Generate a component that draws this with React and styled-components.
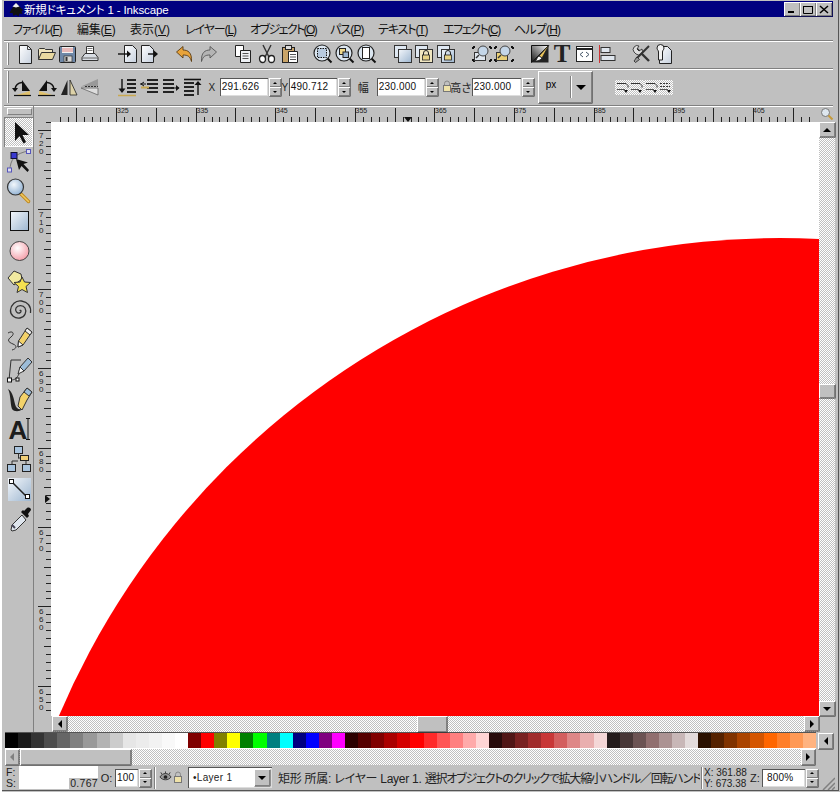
import React from 'react';
import styled, { createGlobalStyle, css } from 'styled-components';

const GlobalStyle = createGlobalStyle`
  html, body { margin: 0; padding: 0; background: #c0c0c0; }
  body { font-family: "Liberation Sans", "Noto Sans CJK JP", sans-serif; font-feature-settings: "palt"; }
`;

const raised = css`
  background-color: #c0c0c0;
  box-shadow: inset 1px 1px 0 #fff, inset -1px -1px 0 #808080, 0.5px 0.5px 0 #222;
`;
const sunken = css`
  background-color: #fff;
  box-shadow: inset 1px 1px 0 #555, inset -1px -1px 0 #ddd;
`;
const dither = css`
  background-image: conic-gradient(#fff 25%, #c0c0c0 0 50%, #fff 0 75%, #c0c0c0 0);
  background-size: 2px 2px;
`;

const Window = styled.div`
  width: 840px;
  height: 792px;
  box-sizing: border-box;
  padding: 1px 7px 2px 4px;
  display: flex;
  flex-direction: column;
  overflow: hidden;
  background: #c0c0c0;
  box-shadow: inset 2px 0 0 #fff, inset 1px 0 0 #c0c0c0, inset -1px -1px 0 #c0c0c0, inset -2px -2px 0 #555;
`;

const TitleBar = styled.div`
  height: 16px;
  flex: none;
  background: #000080;
  display: flex;
  align-items: center;
  padding: 0 1px 0 3px;
  color: #fff;
  font-size: 11.5px;
  letter-spacing: -0.15px;
`;
const TitleText = styled.span`
  margin-left: -1px;
  flex: 1;
  white-space: nowrap;
`;
const WinButton = styled.div`
  ${raised}
  width: 16px;
  height: 14px;
  display: flex;
  align-items: center;
  justify-content: center;
`;

const MenuBar = styled.div`
  height: 24px;
  flex: none;
  box-sizing: border-box;
  display: flex;
  align-items: center;
  padding: 0 0 1px 9px;
  border-bottom: 1px solid #808080;
  box-shadow: 0 1px 0 #fff;
  font-size: 12px;
  color: #111;
`;
const MenuItem = styled.div`
  width: ${p => p.$w}px;
  flex: none;
  white-space: nowrap;
  letter-spacing: ${p => p.$ls}px;
  u { text-underline-offset: 1px; }
`;

const Toolbar = styled.div`
  height: ${p => p.$h}px;
  flex: none;
  display: flex;
  align-items: center;
  padding: 0 0 ${p => p.$pb || 0}px 3px;
  box-sizing: border-box;
  border-bottom: 1px solid #808080;
  box-shadow: 0 1px 0 #fff;
`;
const Handle = styled.div`
  width: 2px;
  height: ${p => p.$h}px;
  flex: none;
  box-sizing: border-box;
  margin-right: 1px;
  border-left: 1px solid #fff;
  border-right: 1px solid #808080;
`;
const Group = styled.div`
  display: flex;
  flex: none;
  margin-left: ${p => p.$ml}px;
  > * { width: ${p => p.$step}px; }
`;
const IconCell = styled.div`
  height: 22px;
  display: flex;
  align-items: center;
  justify-content: center;
  flex: none;
`;

const FieldLabel = styled.span`
  flex: none;
  width: ${p => p.$w}px;
  margin-left: ${p => p.$ml || 0}px;
  font-size: ${p => p.$size || 10}px;
  text-align: center;
  white-space: nowrap;
  color: #222;
`;
const Field = styled.div`
  ${sunken}
  flex: none;
  box-sizing: border-box;
  width: ${p => p.$w}px;
  height: 18px;
  line-height: 18px;
  padding-left: ${p => p.$pad || 2}px;
  font-size: 10px;
  letter-spacing: 0.2px;
  color: #111;
  white-space: nowrap;
  overflow: hidden;
`;
const Spinner = styled.div`
  flex: none;
  width: 12px;
  height: 18px;
  margin-left: 1px;
  display: flex;
  flex-direction: column;
`;
const SpinPart = styled.div`
  ${raised}
  flex: 1;
  display: flex;
  align-items: center;
  justify-content: center;
`;
const Tri = styled.i`
  display: block;
  width: 0;
  height: 0;
  ${p => p.$dir === 'up' && css`border-left: ${p.$s}px solid transparent; border-right: ${p.$s}px solid transparent; border-bottom: ${p.$s}px solid ${p.$c || '#000'};`}
  ${p => p.$dir === 'down' && css`border-left: ${p.$s}px solid transparent; border-right: ${p.$s}px solid transparent; border-top: ${p.$s}px solid ${p.$c || '#000'};`}
  ${p => p.$dir === 'left' && css`border-top: ${p.$s}px solid transparent; border-bottom: ${p.$s}px solid transparent; border-right: ${p.$s}px solid ${p.$c || '#000'};`}
  ${p => p.$dir === 'right' && css`border-top: ${p.$s}px solid transparent; border-bottom: ${p.$s}px solid transparent; border-left: ${p.$s}px solid ${p.$c || '#000'};`}
`;
const UnitCombo = styled.div`
  ${raised}
  flex: none;
  width: 54px;
  height: 32px;
  margin-left: 4px;
  display: flex;
  align-items: center;
  font-size: 10px;
  box-sizing: border-box;
  padding-left: 8px;
`;
const UnitText = styled.span`
  width: 24px;
  margin-top: -6px;
`;
const UnitArrow = styled.div`
  flex: 1;
  height: 22px;
  border-left: 1px solid #808080;
  box-shadow: inset 1px 0 0 #fff;
  display: flex;
  align-items: center;
  justify-content: center;
`;
const SnapCell = styled.div`
  ${dither}
  width: 14.5px;
  height: 15px;
  flex: none;
  display: flex;
  align-items: center;
  justify-content: center;
`;
const SnapRow = styled.div`
  display: flex;
  margin-left: 23px;
`;

const Workspace = styled.div`
  height: 627px;
  flex: none;
  display: flex;
`;
const Toolbox = styled.div`
  width: 30px;
  flex: none;
  box-sizing: border-box;
  border-right: 1px solid #808080;
  display: flex;
  flex-direction: column;
`;
const ToolboxHandle = styled.div`
  height: 5px;
  margin: 2px 1px 2px 3px;
  border: 1px solid;
  border-color: #fff #808080 #808080 #fff;
  flex: none;
`;
const ToolButton = styled.div`
  height: 29.75px;
  flex: none;
  display: flex;
  align-items: center;
  justify-content: center;
  ${p => p.$active && css`${dither} box-shadow: inset 1px 1px 0 #808080, inset -1px -1px 0 #fff;`}
`;
const CanvasGrid = styled.div`
  flex: 1;
  display: grid;
  grid-template-columns: 17px 768px 16px;
  grid-template-rows: 16px 594px 16px;
`;
const TopRuler = styled.svg`
  grid-column: 1 / 3;
  display: block;
`;
const Corner = styled.div`
  display: flex;
  align-items: center;
  justify-content: center;
`;
const SideRuler = styled.svg`
  display: block;
`;
const Canvas = styled.div`
  background: #fff;
  overflow: hidden;
  svg { display: block; }
`;
const VScroll = styled.div`
  ${dither}
  display: flex;
  flex-direction: column;
  justify-content: space-between;
  position: relative;
`;
const VThumb = styled.div`
  ${raised}
  position: absolute;
  left: 0;
  right: 0;
  top: ${p => p.$top}px;
  height: 14px;
`;
const HScroll = styled.div`
  ${dither}
  height: 16px;
  display: flex;
  justify-content: space-between;
  position: relative;
  grid-column: ${p => p.$span || 'auto'};
  margin-left: ${p => p.$ml || 0}px;
  margin-right: ${p => p.$mr || 0}px;
`;
const HThumb = styled.div`
  ${raised}
  position: absolute;
  top: 0;
  bottom: 0;
  left: ${p => p.$left}px;
  width: ${p => p.$w}px;
`;
const ArrowBtn = styled.div`
  ${raised}
  width: ${p => p.$w || 15}px;
  height: ${p => p.$h || 15}px;
  flex: none;
  display: flex;
  align-items: center;
  justify-content: center;
`;

const PaletteRow = styled.div`
  height: 16px;
  flex: none;
  display: flex;
  padding-left: 1px;
`;
const Swatches = styled.div`
  width: 811px;
  height: 15px;
  flex: none;
  display: flex;
  box-shadow: 0 -1px 0 #555, 0 1px 0 #fff;
`;
const Swatch = styled.div`
  flex: 1;
  background: ${p => p.$c};
`;
const PaletteBtn = styled.div`
  ${raised}
  margin-left: 2px;
  width: 16px;
  height: 16px;
  display: flex;
  align-items: center;
  justify-content: center;
`;

const StatusBar = styled.div`
  flex: 1;
  display: flex;
  align-items: center;
  font-size: 11.5px;
  color: #222;
  min-height: 0;
`;
const FillLabels = styled.div`
  width: 13px;
  margin-left: 2px;
  flex: none;
  font-size: 10.5px;
  line-height: 11px;
`;
const FillBoxes = styled.div`
  width: 79px;
  height: 23px;
  flex: none;
  display: flex;
  flex-direction: column;
`;
const FillBox = styled.div`
  height: 12px;
  background: #fff;
`;
const StrokeRow = styled.div`
  display: flex;
  flex: 1;
  align-items: flex-end;
  justify-content: space-between;
  font-size: 10.5px;
  line-height: 11px;
  letter-spacing: 0.3px;
`;
const StrokeBox = styled.div`
  width: 50px;
  height: 11px;
  background: #fff;
`;
const Divider = styled.div`
  flex: none;
  width: 0;
  height: 22px;
  margin: 0 ${p => p.$m || 2}px;
  border-left: 1px solid #808080;
  border-right: 1px solid #fff;
`;
const LayerCombo = styled.div`
  ${sunken}
  flex: none;
  width: 84px;
  height: 21px;
  margin-left: 4px;
  box-sizing: border-box;
  padding: 2px;
  display: flex;
  align-items: center;
  justify-content: space-between;
  font-size: 10px;
  letter-spacing: 0.3px;
`;
const LayerName = styled.span`
  padding-left: 3px;
`;
const Message = styled.div`
  flex: none;
  width: 422px;
  margin-left: 6px;
  font-size: 12px;
  letter-spacing: -0.25px;
  white-space: nowrap;
  overflow: hidden;
`;
const MessageTail = styled.span`
  letter-spacing: -1.2px;
`;
const Coords = styled.div`
  flex: none;
  width: 44px;
  font-size: 10px;
  line-height: 11px;
  white-space: nowrap;
`;
const Grip = styled.svg`
  flex: none;
  margin-left: 2px;
  align-self: flex-end;
`;
const GradientDefs = styled.svg`
  position: absolute;
  width: 0;
  height: 0;
`;

const Ico = ({ s = 20, children }) => (
  <svg width={s} height={s} viewBox={`0 0 ${s} ${s}`}>{children}</svg>
);

const Defs = () => (
  <GradientDefs>
    <defs>
      <linearGradient id="pg" x1="0" y1="0" x2="1" y2="1"><stop offset="0" stopColor="#fff" /><stop offset="1" stopColor="#c6d0de" /></linearGradient>
      <linearGradient id="bl" x1="0" y1="0" x2="1" y2="1"><stop offset="0" stopColor="#f4f7fb" /><stop offset="1" stopColor="#9db6d0" /></linearGradient>
      <linearGradient id="gold" x1="0" y1="0" x2="1" y2="1"><stop offset="0" stopColor="#fff3b0" /><stop offset="1" stopColor="#d9a030" /></linearGradient>
      <linearGradient id="fillg" x1="0" y1="1" x2="1" y2="0"><stop offset="0" stopColor="#111" /><stop offset="1" stopColor="#fff" /></linearGradient>
      <radialGradient id="pink" cx="0.4" cy="0.35" r="0.7"><stop offset="0" stopColor="#fff" /><stop offset="1" stopColor="#f49ba6" /></radialGradient>
      <radialGradient id="lens" cx="0.4" cy="0.35" r="0.7"><stop offset="0" stopColor="#f2f7fc" /><stop offset="1" stopColor="#8fb0d2" /></radialGradient>
    </defs>
  </GradientDefs>
);

const Page = ({ x = 4, y = 1, w = 12, h = 18 }) => (
  <path d={`M${x + .5} ${y + .5}h${w - 4}l4 4v${h - 4}h-${w}z`} fill="url(#pg)" stroke="#222" />
);
const NewIcon = () => <Ico><Page /><path d="M12.5 1.5v4h4" fill="none" stroke="#444" /></Ico>;
const OpenIcon = () => <Ico><path d="M1.5 15.5v-10l1-1h5l1 1h7v3" fill="#efe4bd" stroke="#333" /><path d="M1.5 15.5l3-7h14l-3 7z" fill="#e9d9a0" stroke="#333" /></Ico>;
const SaveIcon = () => (
  <Ico>
    <rect x="1.5" y="2.5" width="16" height="16" rx="1" fill="#6f88a8" stroke="#222" />
    <rect x="4" y="3" width="11" height="6" fill="#f2f2f2" />
    <path d="M4 5h11M4 7h11" stroke="#c33" strokeWidth=".6" />
    <rect x="6" y="12" width="8" height="6" fill="#d8d8d8" stroke="#333" strokeWidth=".7" />
    <rect x="7.5" y="13" width="2" height="4" fill="#333" />
  </Ico>
);
const PrintIcon = () => (
  <Ico>
    <path d="M6.5 2.5h7v7h-7z" fill="#fff" stroke="#333" />
    <path d="M7.5 4.5h5M7.5 6.500h5" stroke="#777" />
    <path d="M5 9.500h10l3 4v3H2v-3z" fill="#d8dde4" stroke="#333" />
    <path d="M2 14h16" stroke="#666" />
  </Ico>
);
const ImportIcon = () => <Ico><Page x={6} y={1} w={12} h={17} /><path d="M0 10h11" stroke="#111" strokeWidth="1.4" /><path d="M9 6.500l4 3.500-4 3.500z" fill="#111" /></Ico>;
const ExportIcon = () => <Ico><Page x={2} y={1} w={12} h={17} /><path d="M9 10h8" stroke="#111" strokeWidth="1.4" /><path d="M15 6.500l4 3.500-4 3.500z" fill="#111" /></Ico>;
const UndoIcon = () => (
  <Ico>
    <path d="M1.500 8L8 2.500v3.500c5 0 9 2.500 8.500 11.500-1.500-5-3.500-6.500-8.500-6.500v3z" fill="#e8a33a" stroke="#5a3a10" strokeWidth=".9" />
  </Ico>
);
const RedoIcon = () => (
  <Ico>
    <path d="M18.500 8L12 2.500v3.500c-5 0-9 2.500-8.500 11.500 1.500-5 3.500-6.500 8.500-6.500v3z" fill="#b4b4b4" stroke="#555" strokeWidth=".9" />
  </Ico>
);
const DuplicateIcon = () => (
  <Ico>
    <path d="M2.500 1.500h8v11h-8z" fill="#fff" stroke="#222" />
    <path d="M7.500 6.500h10v12h-10z" fill="#eef1f5" stroke="#222" />
    <path d="M9.500 9.500h6M9.500 12h6M9.500 14.500h6" stroke="#555" />
  </Ico>
);
const CutIcon = () => (
  <Ico>
    <path d="M6 1l6 12M14 1L8 13" stroke="#333" strokeWidth="1.4" />
    <ellipse cx="5.500" cy="15" rx="3" ry="3.500" fill="#fff" stroke="#222" strokeWidth="1.300" />
    <ellipse cx="14.500" cy="15" rx="3" ry="3.500" fill="#fff" stroke="#222" strokeWidth="1.300" />
  </Ico>
);
const PasteIcon = () => (
  <Ico>
    <rect x="2.500" y="3.500" width="12" height="15" fill="#c9a468" stroke="#222" />
    <rect x="5.500" y="1.500" width="6" height="4" fill="#ddd" stroke="#222" />
    <path d="M8.500 7.500h9v11h-9z" fill="#fff" stroke="#222" />
    <path d="M10 10.500h6M10 13h6M10 15.500h6" stroke="#555" />
  </Ico>
);
const ZoomBase = ({ children }) => (
  <Ico>
    <path d="M13 13l5.500 5.500" stroke="#111" strokeWidth="2" />
    <circle cx="9" cy="9" r="8" fill="#dbe6f0" stroke="#222" strokeWidth="1.200" />
    {children}
  </Ico>
);
const ZoomSelIcon = () => <ZoomBase><rect x="4.500" y="4.500" width="9" height="9" fill="#b8cbe0" stroke="#111" strokeDasharray="1.500 1" /></ZoomBase>;
const ZoomDrawIcon = () => <ZoomBase><rect x="4.500" y="4.500" width="6" height="6" fill="#f0d98a" stroke="#222" /><rect x="8" y="8" width="5.500" height="5.500" fill="#9db6d0" stroke="#222" /></ZoomBase>;
const ZoomPageIcon = () => <ZoomBase><rect x="5.500" y="3.500" width="7" height="11" fill="#fff" stroke="#222" /></ZoomBase>;
const Stack = ({ lock, gold }) => (
  <Ico>
    <rect x="1.500" y="1.500" width="12" height="12" fill="#dfe8f2" stroke="#333" />
    <rect x="5.500" y="5.500" width="13" height="13" fill={gold ? '#f0e6c0' : 'url(#bl)'} stroke="#333" />
    {lock && <path d="M9.500 11v-2a2.500 2.500 0 0 1 5 0v2" fill="none" stroke="#222" />}
    {lock && <rect x="8.500" y="11" width="7" height="5" fill="#e8d488" stroke="#222" strokeWidth=".8" />}
  </Ico>
);
const SnapLens = ({ gold }) => (
  <Ico s={22}>
    <path d="M2 4h2M2 4v2M20 4h-2M20 4v2M2 18h2M2 18v-2M20 18h-2M20 18v-2" stroke="#111" strokeWidth="2" />
    <rect x="3.500" y="9.500" width="11" height="8" fill={gold ? '#e9cf76' : '#dfe6ee'} stroke="#333" />
    <circle cx="12" cy="8" r="5" fill="#c4d6e8" stroke="#444" />
    <path d="M8 12l-3 3" stroke="#333" strokeWidth="1.500" />
  </Ico>
);
const FillIcon = () => (
  <Ico s={22}>
    <path d="M2.500 2.500h17l-17 17z" fill="url(#fillg)" stroke="#111" />
    <path d="M2.500 19.500h17v-17z" fill="#222" />
    <path d="M20 2L10 13l3 2z" fill="#e9c35a" stroke="#222" strokeWidth=".8" />
    <path d="M10 13c-2 1-2 4-4 5 3 0 6-1 7-3z" fill="#fff" stroke="#222" strokeWidth=".8" />
  </Ico>
);
const BigT = styled.span`
  font-family: "Liberation Serif", serif;
  font-weight: bold;
  font-size: 25px;
  line-height: 22px;
  color: #222;
`;
const XmlIcon = () => (
  <Ico>
    <rect x="1.500" y="2.500" width="16" height="15" fill="#fff" stroke="#222" />
    <path d="M2 5h15" stroke="#222" strokeWidth="2" />
    <path d="M8 8l-3 2.500L8 13M11 8l3 2.500L11 13" fill="none" stroke="#456" />
  </Ico>
);
const AlignIcon = () => (
  <Ico>
    <path d="M2.500 1v18" stroke="#c33" strokeWidth="1" />
    <rect x="4" y="3.500" width="9" height="5" fill="#dfe6ee" stroke="#333" />
    <rect x="4" y="11.500" width="14" height="5" fill="#dfe6ee" stroke="#333" />
  </Ico>
);
const PrefsIcon = () => (
  <Ico>
    <path d="M4 4l13 13" stroke="#333" strokeWidth="2.400" />
    <path d="M2 8a4 4 0 0 1 5-6l-2 3 2 2 3-2a4 4 0 0 1-6 5z" fill="#ddd" stroke="#222" strokeWidth=".8" />
    <path d="M17 2L4 15" stroke="#333" strokeWidth="2" />
    <path d="M5 13l-3 4 1.500 1.500 4-3z" fill="#999" stroke="#222" strokeWidth=".8" />
  </Ico>
);
const DocIcon = () => (
  <Ico>
    <Page x={5} y={2} w={12} h={17} />
    <path d="M3 4a3.500 3.500 0 0 1 7 0c0 2-1.500 2-1.500 4v8h-4V8C4.500 6 3 6 3 4z" fill="#f2f2f2" stroke="#222" />
  </Ico>
);
const RotateIcon = ({ flip }) => (
  <Ico>
    <g transform={flip ? 'translate(20 0) scale(-1 1)' : undefined}>
      <path d="M10 3l8 11h-8z" fill="#111" />
      <path d="M3 18.500l15-4.500v4.500z" fill="#e2c36e" />
      <path d="M2 18.500h17" stroke="#111" strokeWidth="1.200" />
      <path d="M3 12a8 7.500 0 0 1 7-6.500" fill="none" stroke="#111" strokeWidth="1.500" />
      <path d="M0 11h6l-3 4z" fill="#111" />
    </g>
  </Ico>
);
const FlipHIcon = () => <Ico><path d="M8.500 3v15H2z" fill="#222" /><path d="M11 3v15h7z" fill="#ddd2a8" stroke="#222" strokeWidth=".8" /></Ico>;
const FlipVIcon = () => <Ico><path d="M18 2v7.500L1 9.500z" fill="#999" /><path d="M18 18v-7L1 11z" fill="#ddd" stroke="#666" strokeWidth=".8" /><path d="M5 9.500h13" stroke="#333" strokeDasharray="2 1" /></Ico>;
const Lines = ({ y0 = 3, n = 4, x = 10, w = 9 }) => (
  <path d={Array.from({ length: n }, (_, i) => `M${x} ${y0 + i * 4}h${w}`).join('')} stroke="#222" strokeWidth="2" />
);
const BottomIcon = () => <Ico><Lines /><path d="M5 2v12" stroke="#111" strokeWidth="1.400" /><path d="M1.500 11.500h7L5 16z" fill="#111" /><path d="M1 18.500h18" stroke="#c9a850" strokeWidth="1.500" /></Ico>;
const LowerIcon = () => <Ico><Lines x={8} w={11} /><path d="M2 10.500h8" stroke="#c9a850" strokeWidth="2" /><path d="M1 7h6M5 5l-3 2 3 2" stroke="#111" fill="none" /></Ico>;
const RaiseIcon = () => <Ico><Lines x={2} w={11} /><path d="M10 11h8" stroke="#111" /><path d="M15 8l3.500 3-3.500 3z" fill="#111" /></Ico>;
const TopIcon = () => <Ico><path d="M1 2.500h17" stroke="#111" strokeWidth="1.600" /><Lines x={1} w={10} y0={6} /><path d="M15 18V6" stroke="#111" strokeWidth="1.400" /><path d="M11.500 8L15 4l3.500 4z" fill="#111" /></Ico>;
const LockIcon = () => (
  <svg width="10" height="12" viewBox="0 0 10 12">
    <path d="M2.500 6V3.500a2.500 2.500 0 0 1 5 0V6" fill="none" stroke="#888" />
    <rect x="1.500" y="5.500" width="7" height="6" fill="#efe2a8" stroke="#777" />
  </svg>
);
const EyeIcon = () => (
  <svg width="13" height="12" viewBox="0 0 14 12">
    <path d="M1 6c3-5 9-5 12 0-3 4-9 4-12 0z" fill="#999" stroke="#333" />
    <circle cx="7" cy="6" r="2" fill="#222" />
    <path d="M3 3L2 1M7 2V0M11 3l1-2" stroke="#333" />
  </svg>
);
const SnapMini = ({ v }) => (
  <svg width="13" height="12" viewBox="0 0 13 12">
    <path d={v === 3 ? 'M1 2.500h10M1 5.500h10' : 'M1 2.500h9l2 2v2'} fill="none" stroke="#333" strokeDasharray={v === 3 ? '2 1' : undefined} />
    <path d="M1 8.500h8" stroke="#555" />
    <path d="M8 9l4 0-2 3z" fill="#111" />
  </svg>
);

const ToolSvg = ({ children }) => <svg width="28" height="28" viewBox="0 0 28 28">{children}</svg>;
const tools = [
  <ToolSvg><path d="M10 4v19l4.500-5 4 7.500 2.500-1.500-3.500-7H24z" fill="#111" /></ToolSvg>,
  <ToolSvg>
    <path d="M5 22C5 12 10 5 24 3" fill="none" stroke="#777" />
    <rect x="6" y="4.500" width="6" height="6" fill="#3a3ad0" stroke="#113" />
    <rect x="21.500" y="1.500" width="4" height="4" fill="#dde" stroke="#55b" />
    <rect x="2.500" y="20" width="4" height="4" fill="#dde" stroke="#55b" />
    <path d="M11 11l3 11 2.500-4 6 6 1.500-2-5.500-6 4.500-1.500z" fill="#111" />
  </ToolSvg>,
  <ToolSvg>
    <path d="M16 17l7.500 7.500" stroke="#c08a20" strokeWidth="3.500" strokeLinecap="round" />
    <path d="M16 17l7.500 7.500" stroke="#f0c860" strokeWidth="1.500" strokeLinecap="round" />
    <circle cx="10.500" cy="10" r="8" fill="url(#lens)" stroke="#333" strokeWidth="1.200" />
  </ToolSvg>,
  <ToolSvg><rect x="5.500" y="4.500" width="18" height="19" fill="url(#bl)" stroke="#111" /></ToolSvg>,
  <ToolSvg><circle cx="14.500" cy="14" r="9.500" fill="url(#pink)" stroke="#444" /></ToolSvg>,
  <ToolSvg>
    <path d="M9 4l7 3 1 5-8 6-6-7z" fill="#f1eaa0" stroke="#333" />
    <path d="M17 10l2.500 5 6 .5-4.500 4 1.500 6-5.500-3-5 3 1.500-6-4.500-4 6-.5z" fill="#f5e050" stroke="#333" />
  </ToolSvg>,
  <ToolSvg><path d="M14.500 14.500c2-1 2 2 0 2.500s-5-2-3.500-5 7-3.500 9 0 0 9-5 10-10-3-9.500-8 5-10 11-9 10 5 9 12" fill="none" stroke="#333" strokeWidth="1.300" /></ToolSvg>,
  <ToolSvg>
    <path d="M3 7c5-3 7 1 3 4s-3 5 2 7 3 5-1 6" fill="none" stroke="#333" />
    <path d="M22 2l5 4-9 13-5 2 .5-6z" fill="#f3d26a" stroke="#333" />
    <path d="M22 2l5 4-2 3-5-4z" fill="#eee" stroke="#333" />
    <path d="M13.500 15l-.5 6 5-2z" fill="#fff" stroke="#333" />
  </ToolSvg>,
  <ToolSvg>
    <path d="M4 24L6 4h10" fill="none" stroke="#333" />
    <path d="M6 24c4 0 6-2 8-6" fill="none" stroke="#333" />
    <rect x="2.500" y="22" width="4" height="4" fill="#fff" stroke="#111" />
    <rect x="11" y="22" width="3" height="3" fill="#fff" stroke="#111" />
    <path d="M23 2l4 4-8 9-5 1 1-5z" fill="#9cbcd8" stroke="#333" />
    <path d="M15 11l-2 7 6-3z" fill="#f4f4f4" stroke="#333" />
  </ToolSvg>,
  <ToolSvg>
    <path d="M3 3c3 6 2 14 4 20 2 3 8 3 10 0-4 1-6-1-7-5S8 6 3 3z" fill="#222" />
    <path d="M22 2l5 4-5 8-5 10-4-4 2-9z" fill="#f3d26a" stroke="#333" />
    <path d="M22 2l5 4-3 4-5-4z" fill="#9cbcd8" stroke="#333" />
  </ToolSvg>,
  <ToolSvg>
    <text x="3.500" y="24" fontFamily="Liberation Sans, sans-serif" fontWeight="bold" fontSize="26" fill="#1d1d1d">A</text>
    <path d="M21 3.500h4M23 3.500v21M21 24.500h4" stroke="#111" fill="none" />
  </ToolSvg>,
  <ToolSvg>
    <rect x="9.500" y="1.500" width="8" height="7" fill="#a9c4de" stroke="#222" />
    <rect x="15.500" y="10.500" width="8" height="5" fill="#f0cf78" stroke="#222" />
    <path d="M13.500 8.500v5M13.500 13h2M7 20v-4h6M21 20v-4" fill="none" stroke="#333" />
    <rect x="2.500" y="19.500" width="8" height="7" fill="#a9c4de" stroke="#222" />
    <rect x="17.500" y="19.500" width="8" height="7" fill="#a9c4de" stroke="#222" />
  </ToolSvg>,
  <ToolSvg>
    <rect x="3" y="3" width="23" height="23" fill="url(#bl)" />
    <path d="M7 7l15 15" stroke="#222" strokeWidth="1.500" />
    <rect x="4.500" y="4.500" width="4" height="4" fill="#fff" stroke="#111" />
    <rect x="20.500" y="19.500" width="4" height="4" fill="#fff" stroke="#111" />
  </ToolSvg>,
  <ToolSvg>
    <path d="M17 10L7 20l-1 5 1 1 4-1 10-10z" fill="#dfe6ee" stroke="#333" />
    <path d="M16 7l6 6 2-2-1-2 3-4c0-2-2-3-4-2l-3 3-1-1z" fill="#111" />
    <path d="M7 20l3 3" stroke="#445" strokeWidth="2" />
  </ToolSvg>,
];

const TOP_X = 34;
const topTicks = [];
for (let k = -7; k < 95; k++) {
  const x = 116 + k * 7.96 - TOP_X;
  if (x < 24 || x > 781) continue;
  const major = (k % 5 + 5) % 5 === 0;
  topTicks.push(<path key={k} d={`M${Math.round(x) + .5} 16V${major ? 2 : 11}`} stroke="#222" />);
}
const topLabels = [325, 335, 345, 355, 365, 375, 385, 395, 405].map((n, i) => (
  <text key={n} x={117 + i * 79.5 - TOP_X} y="7" fontSize="7" fill="#222" fontFamily="Liberation Sans, sans-serif">{n}</text>
));

const sideTicks = [];
for (let k = -2; k < 76; k++) {
  const y = 8 + k * 7.94;
  if (y < 0 || y > 593) continue;
  const mod = (k % 10 + 10) % 10;
  const x1 = mod === 0 ? 4 : mod === 5 ? 10 : 12;
  sideTicks.push(<path key={k} d={`M${x1} ${Math.round(y) + .5}H17`} stroke="#222" />);
}
const sideLabels = ['720', '710', '700', '690', '680', '670', '660', '650'].flatMap((n, i) =>
  n.split('').map((d, j) => (
    <text key={n + j} x="5" y={8 + i * 79.4 + 8 + j * 8} fontSize="8" fill="#222" fontFamily="Liberation Sans, sans-serif">{d}</text>
  ))
);

const palette = [
  '#000000', '#1a1a1a', '#333333', '#4d4d4d', '#666666', '#808080', '#999999', '#b3b3b3', '#cccccc', '#e6e6e6', '#ececec', '#f2f2f2', '#f9f9f9', '#ffffff',
  '#800000', '#ff0000', '#808000', '#ffff00', '#008000', '#00ff00', '#008080', '#00ffff', '#000080', '#0000ff', '#800080', '#ff00ff',
  '#2b0000', '#550000', '#800000', '#aa0000', '#d40000', '#ff0000', '#ff2a2a', '#ff5555', '#ff8080', '#ffaaaa', '#ffd5d5',
  '#280b0b', '#501616', '#782121', '#a02c2c', '#c83737', '#d35f5f', '#de8787', '#e9afaf', '#f4d7d7',
  '#241c1c', '#483737', '#6c5353', '#916f6f', '#ac9393', '#c8b7b7', '#e3dbdb',
  '#2b1100', '#552200', '#803300', '#aa4400', '#d45500', '#ff6600', '#ff7f2a', '#ff9955', '#ffb380',
];

const menus = [
  ['ファイル(', 'F', ')', 64, -1.2], ['編集(', 'E', ')', 53, -0.3], ['表示(', 'V', ')', 55, 0], ['レイヤー(', 'L', ')', 65, -1.1],
  ['オブジェクト(', 'O', ')', 80, -1.6], ['パス(', 'P', ')', 48, -0.9], ['テキスト(', 'T', ')', 65, -1.1], ['エフェクト(', 'C', ')', 71, -1.4], ['ヘルプ(', 'H', ')', 60, -0.8],
];

const Spin = () => (
  <Spinner>
    <SpinPart><Tri $dir="up" $s={2} /></SpinPart>
    <SpinPart><Tri $dir="down" $s={2} /></SpinPart>
  </Spinner>
);

export default function App() {
  return (
    <Window>
      <GlobalStyle />
      <Defs />
      <TitleBar>
        <svg width="18" height="15" viewBox="0 0 18 15">
          <path d="M9 1l7 7-1.500 1.500 1 2.500-3-.5-1 3-2.500-2-2.500 1.500-1-3-3 0 1.500-3z" fill="#111" />
          <path d="M9 1l3.500 3.500-3.500 1-3.500-1z" fill="#eee" />
        </svg>
        <TitleText>新規ドキュメント 1 - Inkscape</TitleText>
        <WinButton><svg width="10" height="8"><path d="M1 7h6" stroke="#000" strokeWidth="2" /></svg></WinButton>
        <WinButton><svg width="10" height="9"><path d="M.5 1.500h9v7h-9z M0 1.500h10" fill="none" stroke="#000" /></svg></WinButton>
        <WinButton><svg width="10" height="9"><path d="M1 1l8 7M9 1L1 8" stroke="#000" strokeWidth="1.500" /></svg></WinButton>
      </TitleBar>

      <MenuBar>
        {menus.map(([a, k, z, w, ls]) => <MenuItem key={k} $w={w} $ls={ls}>{a}<u>{k}</u>{z}</MenuItem>)}
      </MenuBar>

      <Toolbar $h={28} $pb={2}>
        <Handle $h={22} />
        <Group $ml={4.25} $step={21.5}>
          <IconCell><NewIcon /></IconCell><IconCell><OpenIcon /></IconCell><IconCell><SaveIcon /></IconCell><IconCell><PrintIcon /></IconCell>
        </Group>
        <Group $ml={17} $step={21}>
          <IconCell><ImportIcon /></IconCell><IconCell><ExportIcon /></IconCell>
        </Group>
        <Group $ml={14} $step={23}>
          <IconCell><UndoIcon /></IconCell><IconCell><RedoIcon /></IconCell>
        </Group>
        <Group $ml={12} $step={23.5}>
          <IconCell><DuplicateIcon /></IconCell><IconCell><CutIcon /></IconCell><IconCell><PasteIcon /></IconCell>
        </Group>
        <Group $ml={10} $step={22}>
          <IconCell><ZoomSelIcon /></IconCell><IconCell><ZoomDrawIcon /></IconCell><IconCell><ZoomPageIcon /></IconCell>
        </Group>
        <Group $ml={14} $step={21.5}>
          <IconCell><Stack /></IconCell><IconCell><Stack lock gold /></IconCell><IconCell><Stack lock /></IconCell>
        </Group>
        <Group $ml={15} $step={22}>
          <IconCell><SnapLens /></IconCell><IconCell><SnapLens gold /></IconCell>
        </Group>
        <Group $ml={13} $step={22.5}>
          <IconCell><FillIcon /></IconCell><IconCell><BigT>T</BigT></IconCell><IconCell><XmlIcon /></IconCell><IconCell><AlignIcon /></IconCell>
        </Group>
        <Group $ml={13} $step={22}>
          <IconCell><PrefsIcon /></IconCell><IconCell><DocIcon /></IconCell>
        </Group>
      </Toolbar>

      <Toolbar $h={37}>
        <Handle $h={32} />
        <Group $ml={1} $step={22}>
          <IconCell><RotateIcon /></IconCell>
        </Group>
        <Group $ml={3.25} $step={21.5}>
          <IconCell><RotateIcon flip /></IconCell><IconCell><FlipHIcon /></IconCell><IconCell><FlipVIcon /></IconCell>
        </Group>
        <Group $ml={15} $step={22}>
          <IconCell><BottomIcon /></IconCell><IconCell><LowerIcon /></IconCell><IconCell><RaiseIcon /></IconCell><IconCell><TopIcon /></IconCell>
        </Group>
        <FieldLabel $w={16}>X</FieldLabel>
        <Field $w={48}>291.626</Field>
        <Spin />
        <FieldLabel $w={8}>Y</FieldLabel>
        <Field $w={48}>490.712</Field>
        <Spin />
        <FieldLabel $w={27} $size={11}>幅</FieldLabel>
        <Field $w={48}>230.000</Field>
        <Spin />
        <FieldLabel $w={8} $ml={4}><LockIcon /></FieldLabel>
        <FieldLabel $w={22} $size={11}>高さ</FieldLabel>
        <Field $w={49}>230.000</Field>
        <Spin />
        <UnitCombo>
          <UnitText>px</UnitText>
          <UnitArrow><Tri $dir="down" $s={5} /></UnitArrow>
        </UnitCombo>
        <SnapRow>
          {[0, 1, 2, 3].map(v => <SnapCell key={v}><SnapMini v={v} /></SnapCell>)}
        </SnapRow>
      </Toolbar>

      <Workspace>
        <Toolbox>
          <ToolboxHandle />
          {tools.map((t, i) => <ToolButton key={i} $active={i === 0}>{t}</ToolButton>)}
        </Toolbox>
        <CanvasGrid>
          <TopRuler width="785" height="16">
            {topTicks}
            {topLabels}
            <path d="M370 11h8l-4 5z" fill="#111" />
          </TopRuler>
          <Corner>
            <svg width="14" height="14" viewBox="0 0 14 14">
              <circle cx="5.500" cy="5.500" r="4" fill="#dde6ee" stroke="#777" />
              <path d="M8.500 8.500l4 4" stroke="#c59a3a" strokeWidth="2" />
            </svg>
          </Corner>
          <SideRuler width="17" height="594">
            {sideTicks}
            {sideLabels}
            <path d="M11 373l5 4-5 4z" fill="#111" />
          </SideRuler>
          <Canvas>
            <svg width="768" height="594">
              <circle cx="729" cy="899" r="783" fill="#ff0000" />
            </svg>
          </Canvas>
          <VScroll>
            <ArrowBtn $w={16}><Tri $dir="up" $s={4} /></ArrowBtn>
            <VThumb $top={262} />
            <ArrowBtn $w={16}><Tri $dir="down" $s={4} /></ArrowBtn>
          </VScroll>
          <HScroll $span="1 / 3" $ml={18}>
            <ArrowBtn><Tri $dir="left" $s={4} /></ArrowBtn>
            <HThumb $left={365} $w={30} />
            <ArrowBtn><Tri $dir="right" $s={4} /></ArrowBtn>
          </HScroll>
        </CanvasGrid>
      </Workspace>

      <PaletteRow>
        <Swatches>
          {palette.map((c, i) => <Swatch key={i} $c={c} />)}
        </Swatches>
        <PaletteBtn><Tri $dir="left" $s={4} /></PaletteBtn>
      </PaletteRow>
      <HScroll $ml={1} $mr={18}>
        <ArrowBtn $w={14} $h={16}><Tri $dir="left" $s={4} $c="#808080" /></ArrowBtn>
        <HThumb $left={15} $w={111} />
        <ArrowBtn $w={14} $h={16}><Tri $dir="right" $s={4} /></ArrowBtn>
      </HScroll>

      <StatusBar>
        <FillLabels>F:<br />S:</FillLabels>
        <FillBoxes>
          <FillBox />
          <StrokeRow><StrokeBox /><span>0.767</span></StrokeRow>
        </FillBoxes>
        <FieldLabel $w={17} $size={11}>O:</FieldLabel>
        <Field $w={23}>100</Field>
        <Spin />
        <Divider $m={3} />
        <FieldLabel $w={13}><EyeIcon /></FieldLabel>
        <FieldLabel $w={12}><LockIcon /></FieldLabel>
        <LayerCombo>
          <LayerName>•Layer 1</LayerName>
          <ArrowBtn $w={16} $h={17}><Tri $dir="down" $s={4} /></ArrowBtn>
        </LayerCombo>
        <Message>矩形 所属: レイヤー Layer 1. <MessageTail>選択オブジェクトのクリックで拡大縮小ハンドル／回転ハンド</MessageTail></Message>
        <Divider $m={1} />
        <Coords>X: 361.88<br />Y: 673.38</Coords>
        <FieldLabel $w={14} $size={11}>Z:</FieldLabel>
        <Field $w={43} $pad={5}>800%</Field>
        <Spin />
        <Grip width="15" height="15" viewBox="0 0 15 15">
          <path d="M3 15L15 3M8 15l7-7M12 15l3-3" stroke="#808080" strokeWidth="1.500" />
        </Grip>
      </StatusBar>
    </Window>
  );
}
